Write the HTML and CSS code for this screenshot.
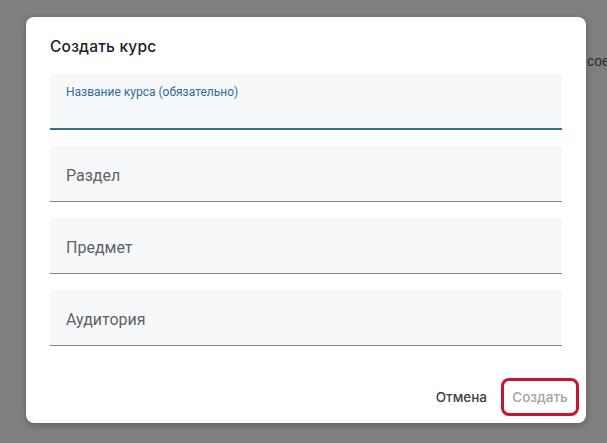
FILE: index.html
```html
<!DOCTYPE html>
<html lang="ru">
<head>
<meta charset="utf-8">
<link rel="stylesheet" href="styles.css">
</head>
<body>
<div class="behind">сое</div>
<div class="dialog">
  <h1 class="title">Создать курс</h1>
  <div class="fields">
    <div class="field active"><span class="float-label">Название курса (обязательно)</span></div>
    <div class="field"><span class="label">Раздел</span></div>
    <div class="field"><span class="label">Предмет</span></div>
    <div class="field"><span class="label">Аудитория</span></div>
  </div>
  <div class="footer">
    <button class="btn cancel">Отмена</button>
    <button class="btn create">Создать</button>
  </div>
</div>
</body>
</html>
```
FILE: styles.css
```css
html, body {
  margin: 0;
  padding: 0;
}
body {
  background: #7f7f7f;
  width: 607px;
  height: 443px;
  overflow: hidden;
  position: relative;
  padding-top: 17px;
  box-sizing: border-box;
}
.behind {
  position: absolute;
  left: 587px;
  top: 53px;
  white-space: nowrap;
  font-family: "Liberation Sans", Arial, sans-serif;
  font-size: 14px;
  color: #2e2e2e;
}
.dialog {
  position: relative;
  margin-left: 26px;
  width: 560px;
  height: 406px;
  background: #fff;
  border-radius: 8px;
  box-shadow: 0 2px 6px rgba(0,0,0,0.25);
  box-sizing: border-box;
  padding: 18px 8px 8px 24px;
  display: flex;
  flex-direction: column;
}
.title {
  margin: 0 0 15px 0;
  font-family: Inter, sans-serif;
  font-weight: 500;
  font-size: 15.5px;
  letter-spacing: 0.2px;
  line-height: 24px;
  color: #202124;
}
.fields {
  display: flex;
  flex-direction: column;
  gap: 16px;
  margin-right: 16px;
}
.field {
  height: 56px;
  box-sizing: border-box;
  background: #f6f8fa;
  border-radius: 4px 4px 0 0;
  border-bottom: 1px solid #80868b;
  display: flex;
  align-items: center;
  padding: 3px 16px 0;
}
.field.active {
  border-bottom: 2px solid #33728b;
  align-items: flex-start;
  padding-top: 11px;
}
.label {
  font-family: Roboto, sans-serif;
  font-size: 16px;
  color: #5f6368;
}
.float-label {
  font-family: Roboto, sans-serif;
  font-size: 12px;
  color: #2f6d95;
}
.footer {
  margin-top: auto;
  display: flex;
  justify-content: flex-end;
  gap: 7px;
}
.btn {
  height: 36px;
  border: none;
  background: none;
  font-family: Inter, sans-serif;
  font-weight: 500;
  font-size: 13.5px;
  padding: 0 8px;
  border-radius: 6px;
}
.cancel {
  color: #3c4043;
}
.create {
  color: #a3a3a3;
  outline: 3px solid #c8142e;
  outline-offset: -2px;
  border-radius: 7px;
  width: 76px;
}
```
